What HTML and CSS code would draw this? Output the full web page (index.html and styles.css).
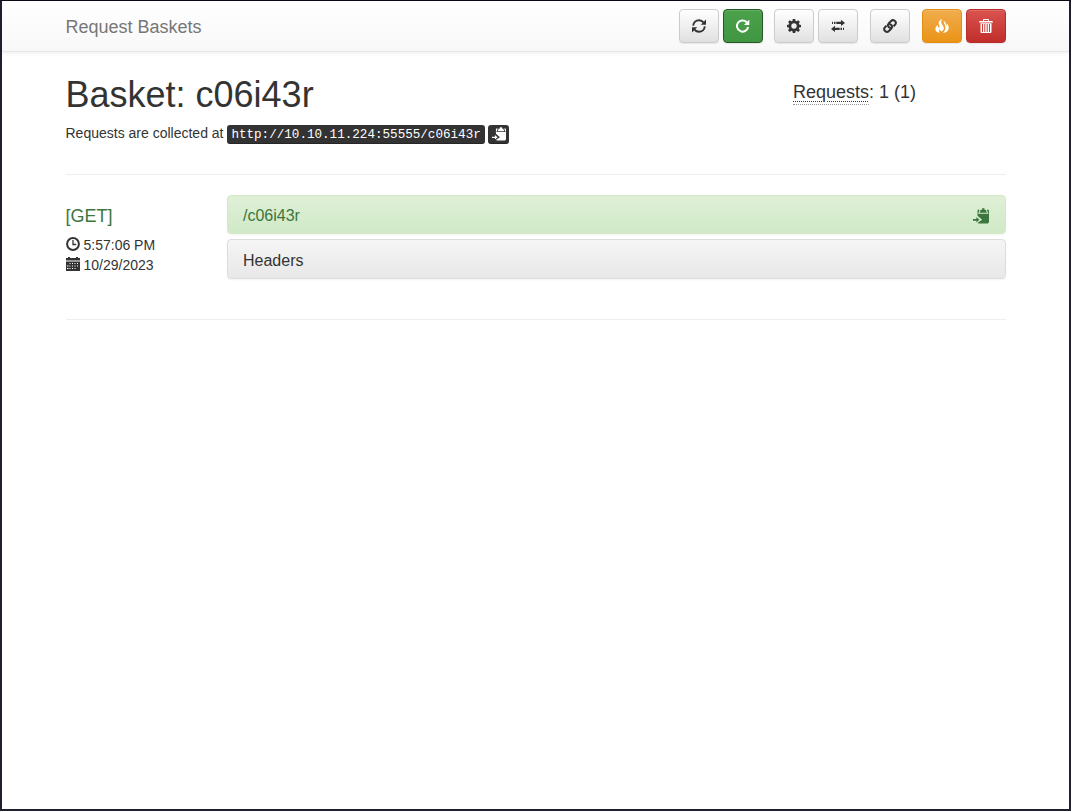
FILE: index.html
```html
<!DOCTYPE html>
<html lang="en">
<head>
<meta charset="utf-8">
<title>Request Basket: c06i43r</title>
<link rel="stylesheet" href="styles.css">
</head>
<body>
<svg class="defs" aria-hidden="true">
  <symbol id="clipboard" viewBox="0 0 16 16">
    <path fill="currentColor" d="M7.300 3.200V2h1.500V1.200Q8.900.3 9.700.3h1.100q.8 0 .9.900V2h1.500v1.200l1 1.600H6.300z"/>
    <path fill="currentColor" d="M4.500 2.500l.8-1h.9v1.700L4.900 5.800h10.700l-1.300-2.600V1.500h.7l1 1V14l-1 1.500H5.500l-.8-.8 4.400-3-4.600-4z"/>
    <path fill="currentColor" d="M0 11h3.400V9L6.400 11.800l-3 2.600v-1.700H0z"/>
  </symbol>
</svg>
<div class="window">
  <nav class="navbar">
    <div class="container bar">
      <a class="brand">Request Baskets</a>
      <div class="toolbar">
        <div class="group">
          <button class="btn" title="Refresh"><svg viewBox="0 0 14 14"><g fill="none" stroke="currentColor" stroke-width="1.9"><path d="M1.2 6.6C1.5 3.3 4 1.2 7 1.2c2 0 3.4.8 4.4 2.2"/><path d="M12.8 7.4C12.5 10.7 10 12.8 7 12.8c-2 0-3.4-.8-4.4-2.2"/></g><path fill="currentColor" d="M14 .5v5.2H8.8zM0 13.5V8.3h5.2z"/></svg></button>
          <button class="btn success" title="Auto Refresh"><svg viewBox="0 0 14 14"><path fill="none" stroke="currentColor" stroke-width="2" d="M10.700 3.200A5.600 5.600 0 1 0 12.100 8"/><path fill="currentColor" d="M13.300.5v5.400H7.900z"/></svg></button>
        </div>
        <div class="group">
          <button class="btn" title="Settings"><svg viewBox="0 0 14 14"><path fill="currentColor" fill-rule="evenodd" d="M5.8 0h2.4l.4 1.9 1 .4 1.6-1.1 1.7 1.7-1.1 1.6.4 1 1.8.4v2.3l-1.8.4-.4 1 1.1 1.6-1.7 1.7-1.6-1.1-1 .4L8.2 14H5.8l-.4-1.8-1-.4-1.6 1.1-1.7-1.7 1.1-1.6-.4-1L0 8.2V5.9l1.8-.4.4-1-1.1-1.6 1.7-1.7 1.6 1.1 1-.4zM7 4.300a2.700 2.700 0 1 0 0 5.400 2.700 2.700 0 0 0 0-5.400z"/></svg></button>
          <button class="btn" title="Configure Responses"><svg viewBox="0 0 14 14"><path fill="currentColor" d="M1 2.700h1v2.400H1zM3 2.700h1.500v2.400H3zM5.300 2.700H10V.8l4 3.100L10 7V5.100H5.300zM4 6.800v1.900h4.700v2.400H4V13L0 9.900zM9.500 8.700H11v2.400H9.500zM12 8.700h1v2.400h-1z"/></svg></button>
        </div>
        <div class="group">
          <button class="btn" title="Share Basket"><svg viewBox="0 0 14 14"><g fill="none" stroke="currentColor" stroke-width="2" stroke-linejoin="round"><path d="M8.700 8.900C6.600 9.200 4.500 7.500 4.900 5.800c.1-.6.5-1 .9-1.500L8.100 2c1-1 2.500-1.100 3.600-.2 1.200 1 1.400 2.600.5 3.700l-1.700 1.900"/><path d="M5.300 5.100C7.400 4.800 9.500 6.500 9.100 8.200c-.1.600-.5 1-.9 1.500L5.900 12c-1 1-2.500 1.100-3.600.2-1.200-1-1.400-2.600-.5-3.700l1.700-1.900"/></g></svg></button>
        </div>
        <div class="group">
          <button class="btn warning" title="Delete Requests"><svg viewBox="0 0 14 14"><path fill="currentColor" d="M7.300 0C5 .9 3.500 2.500 3.700 4.600c.1 1.500 1 2.300.8 3.300-.3.9-1.300.7-1.500-.1-.2-.6 0-1.200.1-1.800C1.300 7 .2 8.600.4 10.200.6 12.200 2.400 13.600 4.800 14c-1-1.300-1-2.700.1-3.900.2 1.300.8 2.200 1.900 2.500 1.400-1 2.300-2.600 2-4.200-.3-1.800-2.200-2.700-2.500-4.600C6.100 2.400 6.500 1.100 7.300 0z"/><path fill="currentColor" d="M8.700 1.700c-.2 1.600.7 2.900 1.200 4.200 1.200 3.100.4 5.700-1.900 8.100 3.300-.3 5.600-2.300 5.700-5 0-1.900-.8-3.600-1.900-4.700.2 1 .1 1.900-.2 2.600C11.200 5 10.400 2.800 8.700 1.700z"/></svg></button>
          <button class="btn danger" title="Destroy Basket"><svg viewBox="0 0 14 14"><path fill="currentColor" fill-rule="evenodd" d="M4 2V.700Q4 0 4.700 0h4.600q.700 0 .700.700V2h3l1 .8v.7H0v-.7L1 2zM5 1v1h4V1zM1.500 4.300h11V13q0 1-.8 1H2.300q-.8 0-.8-1zM3 5v8h1V5zM5.300 5v8h1V5zM7.700 5v8h1V5zM10 5v8h1V5z"/></svg></button>
        </div>
      </div>
    </div>
  </nav>
  <main class="container">
    <header class="heading">
      <div class="intro">
        <h1>Basket: c06i43r</h1>
        <p><span>Requests are collected at </span><kbd>http://10.10.11.224:55555/c06i43r</kbd><kbd class="copy"><svg><use href="#clipboard"/></svg></kbd></p>
      </div>
      <h4 class="count"><abbr title="Current requests count (Total count)">Requests</abbr>: 1 (1)</h4>
    </header>
    <hr>
    <section class="request">
      <div class="meta">
        <h4>[GET]</h4>
        <div class="line"><svg viewBox="0 0 14 14"><g fill="none" stroke="currentColor"><circle cx="7" cy="7" r="5.900" stroke-width="2"/><path stroke-width="1.300" d="M7 3v4.500h3.200"/></g></svg>5:57:06 PM</div>
        <div class="line"><svg viewBox="0 0 14 14"><path fill="currentColor" fill-rule="evenodd" d="M2 0h2v1h6V0h2v1h2v2.500H0V1h2zM0 4.500h14V14H0zM3.500 6v1h1V6zM6 6v1h1V6zM8.500 6v1h1V6zM11 6v1h1V6zM1 8.500v1h1.500v-1zM3.500 8.500v1h1v-1zM6 8.500v1h1v-1zM8.500 8.500v1h1v-1zM11 8.500v1h1v-1zM1 11v1h1.500v-1zM3.500 11v1h1v-1zM6 11v1h1v-1zM8.500 11v1h1v-1z"/></svg>10/29/2023</div>
      </div>
      <div class="panels">
        <div class="panel path"><span>/c06i43r</span><svg><use href="#clipboard"/></svg></div>
        <div class="panel"><span>Headers</span></div>
      </div>
    </section>
    <hr class="last">
  </main>
</div>
</body>
</html>
```
FILE: styles.css
```css
* { box-sizing: border-box; }
body {
  margin: 0;
  font: 14px/20px "Liberation Sans", Arial, sans-serif;
  color: #333;
}
.defs { position: absolute; width: 0; height: 0; }
svg { display: block; width: 14px; height: 14px; }
.window {
  height: 811px;
  border: 2px solid #1e202d;
  border-top: 1px solid #0b0814;
  background: #fff;
}
.container { width: 940.5px; margin: 0 auto 0 63.5px; }
.navbar {
  height: 51px;
  background: linear-gradient(#fff, #f8f8f8);
  border-bottom: 1px solid #e7e7e7;
  box-shadow: 0 1px 5px rgba(0, 0, 0, .075);
}
.bar { display: flex; justify-content: space-between; padding-top: 8px; }
.brand {
  font-size: 18px;
  line-height: 36px;
  color: #777;
  text-shadow: 0 1px 0 rgba(255, 255, 255, .25);
}
.toolbar { display: flex; gap: 12px; }
.group { display: flex; gap: 4px; }
.group:first-child { margin-right: -1px; }
.btn {
  width: 40px;
  height: 34px;
  padding: 0 12px;
  border: 1px solid #ccc;
  border-radius: 4px;
  color: #333;
  background: linear-gradient(#fff, #e0e0e0);
  box-shadow: inset 0 1px 0 rgba(255, 255, 255, .15), 0 1px 1px rgba(0, 0, 0, .075);
}
.success { color: #fff; border-color: #255625; background: linear-gradient(#4ba24b, #419641); }
.warning { color: #fff; border-color: #e38d13; background: linear-gradient(#f0ad4e, #eb9316); }
.danger { color: #fff; border-color: #b92c28; background: linear-gradient(#d9534f, #c12e2a); }
.heading { display: flex; justify-content: space-between; padding-top: 22px; }
h1, h4, p { margin: 0; font-weight: 400; }
h1 { font-size: 36px; line-height: 40px; padding-top: 1px; }
.intro p { display: flex; align-items: flex-start; margin-top: 8px; white-space: pre; }
.intro span { margin-right: -.5px; }
kbd {
  height: 19px;
  padding: 0 4.500px;
  border-radius: 3px;
  color: #fff;
  background: #333;
  font: 12.6px/20px "Liberation Mono", monospace;
  box-shadow: inset 0 -1px 0 rgba(0, 0, 0, .25);
  margin-top: 2px;
}
.copy { width: 21px; margin-left: 3px; padding: 2px 3px 3px 4px; }
.copy svg { width: 14px; height: 14px; }
.count { width: 213px; padding-top: 8px; font-size: 18px; line-height: 20px; }
abbr {
  display: inline-block;
  height: 23px;
  border-bottom: 1px dotted #999;
  text-decoration: underline dotted 1px;
  text-underline-offset: 3px;
}
hr { height: 1px; margin: 30px 0 20px; border: 0; background: #eee; }
.request { display: flex; }
.meta { width: 161.5px; padding-top: 11px; }
.meta h4 { font-size: 18px; line-height: 20px; color: #3c763d; margin-bottom: 9px; }
.line { display: flex; gap: 4px; }
.line svg { margin-top: 2px; }
.panels { flex: 1; display: flex; flex-direction: column; gap: 5px; }
.panel {
  display: flex;
  justify-content: space-between;
  align-items: center;
  height: 40px;
  padding: 3px 15px 0;
  border: 1px solid #ddd;
  border-radius: 4px;
  font-size: 16px;
  line-height: 18px;
  background: linear-gradient(#f5f5f5, #e8e8e8);
  box-shadow: 0 1px 2px rgba(0, 0, 0, .05);
}
.path { height: 39px; color: #3c763d; border-color: #d6e9c6; background: linear-gradient(#dff0d8, #d0e9c6); }
.panel svg { width: 16px; height: 16px; margin: 0 1px 0 0; }
hr.last { margin-top: 40px; }
```
